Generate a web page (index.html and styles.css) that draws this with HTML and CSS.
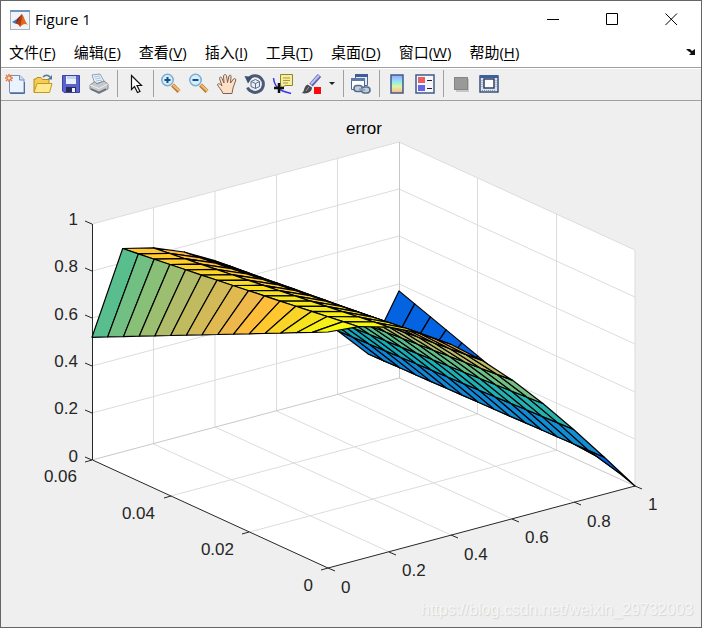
FILE: index.html
```html
<!DOCTYPE html>
<html lang="zh-CN">

<head>
  <meta charset="UTF-8">
  <meta name="viewport" content="width=device-width, initial-scale=1.0">
  <title>Figure 1</title>
  <link rel="stylesheet" href="styles.css">
</head>

<body>
  <div class="window">

    <header class="titlebar">
      <svg class="logo" viewBox="0 0 20 20">
        <rect x="0.5" y="0.5" width="19" height="19" fill="#f1f3f6" stroke="#a9b2bf"/>
        <rect x="0" y="0" width="20" height="2" fill="#7096bd"/>
        <path d="M2 12 L7 9 L9 11 L6 14 Z" fill="#3c78b4"/>
        <path d="M7 9 L12 4 L10 11 L6 14 Z" fill="#7d2a20"/>
        <path d="M12 4 C14 6 15 12 18 15 C15 13 13 14 10 17 C9 14 8 14 6 14 C9 12 10 7 12 4 Z" fill="#dd6a1c"/>
        <path d="M12 4 C12 9 11 13 10 17 C9 14 8 14 6 14 C9 12 10 7 12 4 Z" fill="#b5371c"/>
      </svg>
      <span class="caption">Figure 1</span>
      <div class="controls">
        <button class="control" aria-label="Minimize">
          <svg viewBox="0 0 13 13"><path d="M0 6.5H12"/></svg>
        </button>
        <button class="control" aria-label="Maximize">
          <svg viewBox="0 0 13 13"><path d="M0.5 0.5H11.5V11.5H0.5Z"/></svg>
        </button>
        <button class="control" aria-label="Close">
          <svg viewBox="0 0 13 13"><path d="M0.5 0.5L12 12M12 0.5L0.5 12"/></svg>
        </button>
      </div>
    </header>

    <nav class="menubar">
      <button class="menu">文件(<u>F</u>)</button>
      <button class="menu">编辑(<u>E</u>)</button>
      <button class="menu">查看(<u>V</u>)</button>
      <button class="menu">插入(<u>I</u>)</button>
      <button class="menu">工具(<u>T</u>)</button>
      <button class="menu">桌面(<u>D</u>)</button>
      <button class="menu">窗口(<u>W</u>)</button>
      <button class="menu">帮助(<u>H</u>)</button>
      <button class="dock" aria-label="Dock">
        <svg viewBox="0 0 10 8"><path d="M0 1H4L6 3L9 1V7H3L5 5L2 3Z" fill="#111"/></svg>
      </button>
    </nav>

    <div class="toolbar">
      <button class="tool" aria-label="New figure">
        <svg viewBox="0 0 22 22">
          <path d="M5.500 2.500H16L20 6.500V19.500H5.500Z" fill="#eaf3ff" stroke="#7391ba"/>
          <path d="M15.500 2.500V7H20" fill="#cfdef2" stroke="#7391ba"/>
          <path d="M6 20.500H20.500V9" fill="none" stroke="#4b6c9c"/>
          <path d="M5 1V9M1 5H9M2 2L8 8M8 2L2 8" stroke="#e0774a" stroke-width="1.500"/>
          <circle cx="5" cy="5" r="1.500" fill="#ffe6a8"/>
        </svg>
      </button>
      <button class="tool" aria-label="Open">
        <svg viewBox="0 0 22 22">
          <path d="M2 19V6H4L5 4.500H9L10.500 6.500H17V10" fill="#f3ce56" stroke="#b88a1c"/>
          <path d="M2 19.500L5 10.500H20L17.500 19.500Z" fill="#ffe98c" stroke="#c5971f"/>
          <path d="M11 4C13 1.500 16 1.500 18 4" fill="none" stroke="#52779c" stroke-width="1.500"/>
          <path d="M20 2V6.500H15.500Z" fill="#52779c"/>
        </svg>
      </button>
      <button class="tool" aria-label="Save">
        <svg viewBox="0 0 22 22">
          <path d="M2.500 2.500H19.500V19.500H4L2.500 18Z" fill="#5b62cc" stroke="#3b43a4"/>
          <path d="M6 3H16V11H6Z" fill="#e9f0fc"/>
          <path d="M7 3H16V6H7Z" fill="#c3d2ee"/>
          <path d="M6 14H16V19H6Z" fill="#272c57"/>
          <path d="M12 15H15V19H12Z" fill="#eef0fa"/>
        </svg>
      </button>
      <button class="tool" aria-label="Print">
        <svg viewBox="0 0 22 22">
          <path d="M4 2L12 1L16 8L7 11Z" fill="#eef6ff" stroke="#8ba0bb"/>
          <path d="M6 4L12 3M7 6L13 5M8 8L14 7" stroke="#a6bdd7"/>
          <path d="M2 12L7 8.500L9 11L16 8L20 11V16L11 20.500L2 16Z" fill="#c5c9cc" stroke="#868c90"/>
          <path d="M2 12L11 15.500L20 11" fill="none" stroke="#f0f0f0"/>
          <path d="M3 16L11 19.500L18 16" fill="none" stroke="#686f74" stroke-width="1.500"/>
        </svg>
      </button>
      <span class="separator"></span>
      <button class="tool" aria-label="Edit plot">
        <svg viewBox="0 0 22 22">
          <path d="M7.500 2.500V16.500L10.500 13.500L13.500 19.500L16 18.500L13 12.500H17.500Z" fill="#fff" stroke="#111" stroke-width="1.200"/>
        </svg>
      </button>
      <span class="separator"></span>
      <button class="tool" aria-label="Zoom in">
        <svg viewBox="0 0 22 22">
          <path d="M12.500 12L19 18.500" stroke="#b87b36" stroke-width="4"/>
          <path d="M13 12L19.500 18" stroke="#f2bd6c" stroke-width="2"/>
          <circle cx="7.500" cy="7" r="5.700" fill="#d2f0fb" stroke="#82a9d3" stroke-width="1.500"/>
          <path d="M4.500 7H10.500M7.500 4V10" stroke="#184c82" stroke-width="2"/>
        </svg>
      </button>
      <button class="tool" aria-label="Zoom out">
        <svg viewBox="0 0 22 22">
          <path d="M12.500 12L19 18.500" stroke="#b87b36" stroke-width="4"/>
          <path d="M13 12L19.500 18" stroke="#f2bd6c" stroke-width="2"/>
          <circle cx="7.500" cy="7" r="5.700" fill="#d2f0fb" stroke="#82a9d3" stroke-width="1.500"/>
          <path d="M4.500 7H10.500" stroke="#184c82" stroke-width="2"/>
        </svg>
      </button>
      <button class="tool" aria-label="Pan">
        <svg viewBox="0 0 22 22">
          <path d="M7 20.500C6 17 2 14 1.500 11.500C2 10 4 10.500 6 13L3.500 5.500C3.500 3.500 5.500 3.500 6 5.500L8 10L7.500 3C8 1 10 1 10.500 3L11.500 9.500L13 3C13.500 1.500 15.500 2 15 4L14.500 10L17.500 6C19 5 20.500 6 19.500 8L17 15L16 20.500Z" fill="#fddfc5" stroke="#7c6252"/>
        </svg>
      </button>
      <button class="tool" aria-label="Rotate 3D">
        <svg viewBox="0 0 22 22">
          <path d="M4.500 6A8.300 8.300 0 1 1 3.500 14.500" fill="none" stroke="#4a5b7a" stroke-width="3"/>
          <path d="M0.500 3L8.500 4L4 10.500Z" fill="#3e5070"/>
          <path d="M7 8.500L11.500 6.500L15.500 8.500V13.500L11.500 15.500L7 13.500Z" fill="#e8edf5" stroke="#596d8e"/>
          <path d="M7 8.500L11.500 10.500L15.500 8.500M11.500 10.500V15.500" fill="none" stroke="#596d8e"/>
        </svg>
      </button>
      <button class="tool" aria-label="Data cursor">
        <svg viewBox="0 0 22 22">
          <path d="M1.500 5C2 10 4 14 8 16.500S14 19 19 20.500" fill="none" stroke="#3636ee" stroke-width="1.500"/>
          <path d="M8.500 1.500H20.500V12.500H13L9 16V12.500H8.500Z" fill="#f6ee9c" stroke="#90852e"/>
          <path d="M11 5H18M11 7.500H18M11 10H16" stroke="#a49a44"/>
          <path d="M2 15H12M7 10V20" stroke="#111" stroke-width="2.500"/>
        </svg>
      </button>
      <button class="tool" aria-label="Brush">
        <svg viewBox="0 0 22 22">
          <path d="M11 12L19.500 2.500" stroke="#5f62b0" stroke-width="4.500"/>
          <path d="M11 11L19 2.500" stroke="#bfc5f4" stroke-width="2"/>
          <path d="M1.500 20C5 19 3 14 7.500 11.500L12 14.500C12 19 7 21.500 1.500 20Z" fill="#474b50"/>
          <path d="M6 18L9 14" stroke="#9a9fa4"/>
          <rect x="14" y="14" width="7" height="7" fill="#fa0a0a"/>
        </svg>
      </button>
      <button class="arrow" aria-label="Brush options">
        <svg viewBox="0 0 6 4"><path d="M0 0H6L3 3Z" fill="#222"/></svg>
      </button>
      <span class="separator"></span>
      <button class="tool" aria-label="Link plot">
        <svg viewBox="0 0 22 22">
          <path d="M5.500 1.500H17.500V12.500H5.500Z" fill="#e2ebf7" stroke="#4d6690"/>
          <path d="M5 1H18V4H5Z" fill="#3f5c94"/>
          <path d="M1.500 5.500H14.500V16.500H1.500Z" fill="#fff" stroke="#4d6690"/>
          <path d="M1 5H15V8H1Z" fill="#5c79ab"/>
          <rect x="4" y="12.500" width="8.500" height="6" rx="3" fill="#bfcfdf" stroke="#576c88" stroke-width="1.600"/>
          <rect x="11.500" y="14" width="8.500" height="6" rx="3" fill="#bfcfdf" stroke="#576c88" stroke-width="1.600"/>
          <path d="M9 16L15 17" stroke="#8da2ba" stroke-width="2"/>
        </svg>
      </button>
      <span class="separator"></span>
      <button class="tool" aria-label="Insert colorbar">
        <svg viewBox="0 0 22 22">
          <defs>
            <linearGradient id="bar" x1="0" y1="0" x2="0" y2="1">
              <stop offset="0" stop-color="#a0a0ff"/>
              <stop offset="0.350" stop-color="#8ee5f5"/>
              <stop offset="0.650" stop-color="#e2f4a0"/>
              <stop offset="1" stop-color="#ffaf98"/>
            </linearGradient>
          </defs>
          <rect x="5" y="2" width="12" height="18" fill="url(#bar)" stroke="#405b86" stroke-width="1.500"/>
        </svg>
      </button>
      <button class="tool" aria-label="Insert legend">
        <svg viewBox="0 0 22 22">
          <rect x="2" y="2" width="18" height="18" fill="#f4f6fb" stroke="#405b86" stroke-width="1.500"/>
          <rect x="4" y="4" width="7" height="6" fill="#e5605e"/>
          <rect x="4" y="12" width="7" height="6" fill="#6764e6"/>
          <path d="M13 7.500H18M13 15.500H18" stroke="#222"/>
        </svg>
      </button>
      <span class="separator"></span>
      <button class="tool" aria-label="Hide plot tools">
        <svg viewBox="0 0 22 22">
          <rect x="6" y="6" width="13" height="13" fill="#c6c6c6"/>
          <rect x="4.500" y="4.500" width="13" height="12" fill="#999" stroke="#858585"/>
        </svg>
      </button>
      <button class="tool" aria-label="Show plot tools">
        <svg viewBox="0 0 22 22">
          <rect x="2" y="3" width="18" height="16" fill="#dfe4ea" stroke="#3a517e" stroke-width="1.500"/>
          <rect x="2" y="2" width="18" height="3" fill="#3f5f9c"/>
          <rect x="6" y="6" width="10" height="9" fill="#fff" stroke="#2e4264" stroke-width="1.500"/>
          <path d="M4 7V15M18 7V15M4 17.500H18" stroke="#8494ac" stroke-dasharray="1 1"/>
        </svg>
      </button>
    </div>

    <main class="figure">
      <svg class="plot" viewBox="0 0 700 526">
        <path class="box" d="M91 123L398 41L634 149V385L327 467L91 359Z"/>

        <g class="grid">
          <path d="M91 123L398 41L634 149V385"/>
          <path d="M91 170L398 88L634 196M91 217L398 135L634 243M91 265L398 183L634 291M91 312L398 230L634 338"/>
          <path d="M152.500 107V343L388.500 451M275.500 74V310L511.500 418M214 90V326L450 434M336.500 57V293L572.500 401"/>
          <path d="M169.500 395L476.500 313V77M248.500 431L555.500 349V113"/>
          <path class="back" d="M91 359L398 277L634 385M398.500 41V277"/>
        </g>

        <g class="axes">
          <path d="M91.500 123V359L327 467L634 385"/>
          <path d="M91 123L84 120M91 170L84 167M91 217L84 214M91 265L84 262M91 312L84 309M91 359L84 356"/>
          <path d="M91 359L84 361M170 395L163 397M248 431L241 433M327 467L320 469"/>
          <path d="M327 467L334 470M388 451L395 454M450 434L457 437M511 418L518 421M573 401L580 404M634 385L641 388"/>
        </g>

        <g id="surface" class="surface"></g>

        <text class="title" x="363" y="33">error</text>
        <g class="labels end">
          <text x="77" y="124">1</text>
          <text x="77" y="171">0.8</text>
          <text x="77" y="219">0.6</text>
          <text x="77" y="266">0.4</text>
          <text x="77" y="313">0.2</text>
          <text x="77" y="361">0</text>
          <text x="76" y="381">0.06</text>
          <text x="154" y="418">0.04</text>
          <text x="233" y="454">0.02</text>
          <text x="312" y="490">0</text>
        </g>
        <g class="labels">
          <text x="340" y="492">0</text>
          <text x="401" y="475">0.2</text>
          <text x="463" y="459">0.4</text>
          <text x="524" y="442">0.6</text>
          <text x="586" y="426">0.8</text>
          <text x="647" y="409">1</text>
        </g>
        <text class="watermark" x="420" y="514">https://blog.csdn.net/weixin_29732003</text>
      </svg>
    </main>

  </div>
  <script src="script.js"></script>
</body>

</html>
```

FILE: styles.css
```css
* {
  margin: 0;
  padding: 0;
  box-sizing: border-box;
}

body {
  background: #efefef;
  font-family: "Open Sans", "Noto Sans CJK SC", sans-serif;
  font-size: 15px;
  color: #000;
}

button {
  border: none;
  background: none;
  font: inherit;
  color: inherit;
}

.window {
  min-height: 100vh;
  display: flex;
  flex-direction: column;
  border: 1px solid #656565;
  background: #efefef;
}

.titlebar {
  display: flex;
  align-items: center;
  height: 37px;
  padding-left: 9px;
  background: #fff;
}

.logo {
  width: 20px;
  height: 20px;
}

.caption {
  margin-left: 5px;
  padding-bottom: 2px;
}

.controls {
  display: flex;
  height: 100%;
  margin-left: auto;
}

.control {
  display: flex;
  align-items: center;
  justify-content: center;
  width: 59px;
}

.control svg {
  width: 13px;
  height: 13px;
  fill: none;
  stroke: #000;
}

.menubar {
  display: flex;
  align-items: center;
  gap: 18px;
  height: 30px;
  padding: 0 5px 2px 8px;
  border-bottom: 1px solid #a0a0a0;
  background: #fff;
}

.menu {
  line-height: 24px;
  white-space: nowrap;
}

.menu u {
  text-underline-offset: 2px;
}

.dock {
  display: flex;
  margin-left: auto;
}

.dock svg {
  width: 10px;
  height: 8px;
}

.toolbar {
  display: flex;
  align-items: center;
  height: 33px;
  padding-bottom: 2px;
  border-top: 1px solid #fff;
  border-bottom: 1px solid #a0a0a0;
}

.tool {
  display: flex;
  align-items: center;
  justify-content: center;
  width: 28px;
  height: 28px;
}

.tool svg {
  width: 22px;
  height: 22px;
  fill: none;
}

.arrow {
  display: flex;
  align-items: center;
  justify-content: center;
  width: 14px;
  height: 28px;
}

.arrow svg {
  width: 6px;
  height: 4px;
}

.separator {
  width: 1px;
  height: 27px;
  margin: 0 3px 0 4px;
  background: #a0a0a0;
}

.figure {
  flex: 1;
}

.plot {
  display: block;
  width: 100%;
  font-family: "Liberation Sans", Arial, sans-serif;
  font-size: 17px;
}

.box {
  fill: #fff;
}

.grid {
  fill: none;
  stroke: #dcdcdc;
}

.back {
  stroke: #c8c8c8;
}

.axes {
  fill: none;
  stroke: #262626;
}

.surface {
  stroke: #000;
  stroke-width: 1.2;
  stroke-linejoin: round;
}

.title {
  text-anchor: middle;
}

.labels {
  fill: #262626;
}

.end {
  text-anchor: end;
}

.watermark {
  font-size: 16px;
  fill: #f6f6f6;
  text-shadow: 1px 1px 1px #d4d4d4;
}
```

FILE: script.js
```js
// number of intervals along x and t
const NX = 10;
const NT = 15;

// color stops, value from 0 to 1
const colors = [
  [0.00, 53, 42, 135],
  [0.13, 3, 99, 225],
  [0.16, 3, 99, 225],
  [0.30, 17, 140, 212],
  [0.42, 22, 174, 184],
  [0.55, 88, 190, 142],
  [0.62, 139, 192, 118],
  [0.68, 176, 188, 105],
  [0.74, 208, 186, 89],
  [0.81, 240, 184, 74],
  [0.84, 255, 189, 60],
  [0.87, 255, 199, 48],
  [0.94, 245, 228, 30],
  [1.00, 249, 251, 14]
];

function getColor(v) {
  let k = 1;
  while (k < colors.length - 1 && v > colors[k][0]) k++;
  let a = colors[k - 1];
  let b = colors[k];
  let f = (v - a[0]) / (b[0] - a[0]);
  let rgb = [1, 2, 3].map(c => Math.round(a[c] + (b[c] - a[c]) * f));
  return `rgb(${rgb.join(',')})`;
}

function height(i, j) {
  let t = j / NT;
  if (i === 0) return 1 - 0.48 * t;
  if (i === NX) return 0.369 * t;
  return Math.cos(Math.PI * i / NX / 2) * Math.exp(-0.137 * t);
}

function project(i, j) {
  let x = i / NX;
  let t = j / NT;
  let px = 327 + 307 * x - 236 * t;
  let py = 467 - 82 * x - 108 * t - 236 * height(i, j);
  return px.toFixed(1) + ',' + py.toFixed(1);
}

let surface = document.getElementById('surface');

// farthest faces first
for (let i = NX - 1; i >= 0; i--) {
  for (let j = NT - 1; j >= 0; j--) {
    let face = document.createElementNS('http://www.w3.org/2000/svg', 'polygon');
    face.setAttribute('points', [project(i, j), project(i + 1, j), project(i + 1, j + 1), project(i, j + 1)].join(' '));
    face.setAttribute('fill', getColor(height(i, j)));
    surface.appendChild(face);
  }
}
```
